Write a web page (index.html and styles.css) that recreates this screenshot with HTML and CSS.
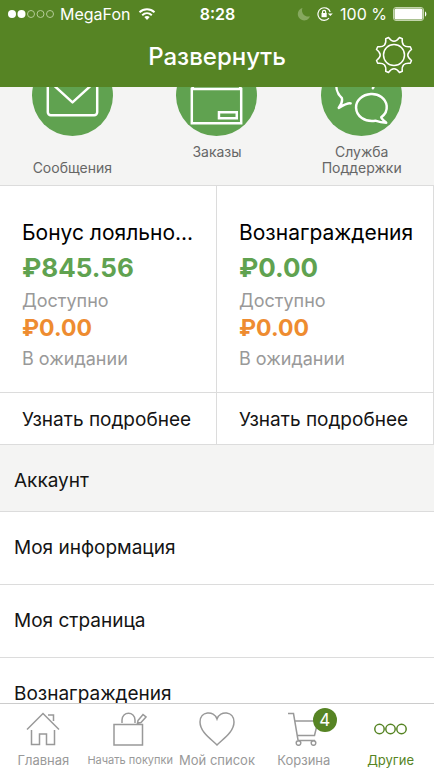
FILE: index.html
```html
<!DOCTYPE html>
<html lang="ru">
<head>
<meta charset="utf-8">
<meta name="viewport" content="width=device-width, initial-scale=1">
<title>Развернуть</title>
<link rel="stylesheet" href="styles.css">
</head>
<body>
<header class="header">
  <div class="status">
    <div class="status-side">
      <svg class="signal" width="46" height="10" viewBox="0 0 46 10" fill="none" stroke="#b3cb96">
        <circle cx="4" cy="5" r="4" fill="#fff" stroke="none"/><circle cx="13.500" cy="5" r="4" fill="#fff" stroke="none"/>
        <circle cx="23" cy="5" r="3.500"/><circle cx="32.500" cy="5" r="3.500"/><circle cx="42" cy="5" r="3.500"/>
      </svg>
      <span class="carrier">MegaFon</span>
      <svg class="wifi" width="18" height="12" viewBox="0 0 18 12" fill="none" stroke="#fff" stroke-width="2">
        <path d="M1.500 4.300C5.800.3 12.200.3 16.500 4.300M4.200 7.200c2.800-2.500 6.800-2.500 9.600 0"/><path d="M6.300 9c1.600-1.300 3.800-1.300 5.400 0L9 12z" fill="#fff" stroke="none"/>
      </svg>
    </div>
    <time class="clock">8:28</time>
    <div class="status-side status-right">
      <svg width="14" height="14" viewBox="0 0 14 14"><path d="M5.500 1A6.300 6.300 0 1 0 13 9.300C8 10.800 3.400 6 5.500 1z" fill="#86a85f"/></svg>
      <svg width="17" height="14" viewBox="0 0 17 14" fill="none" stroke="#fff" stroke-width="1.200">
        <path d="M13.200 5A6.300 6.300 0 1 0 12 11.200"/><path d="M10.800 6.500h5L13.300 9z" fill="#fff" stroke="none"/><path d="M5.500 6.500V5a1.600 1.600 0 0 1 3.200 0v1.500"/><path d="M4.500 6h5.200v4.200H4.500z" fill="#fff" stroke="none"/>
      </svg>
      <span>100 %</span>
      <svg class="battery" width="34" height="14" viewBox="0 0 34 14"><rect x=".5" y=".5" width="30" height="13" rx="2.500" fill="none" stroke="#c3d5ac"/><rect x="1.500" y="1.500" width="28" height="11" rx="1.500" fill="#fff"/><path d="M32 4.500c1.800.5 1.800 4.500 0 5z" fill="#fff"/></svg>
    </div>
  </div>
  <div class="navbar">
    <h1 class="title">Развернуть</h1>
    <button class="settings" aria-label="Настройки">
      <svg width="38" height="38" viewBox="-19 -19 38 38" fill="none" stroke="#fff" stroke-width="1.500" stroke-linejoin="round">
        <circle r="10.500"/>
        <path d="M-5.500-17.500Q0-10 5.500-17.500L8.300-16.300Q7.100-7.100 16.300-8.300L17.500-5.500Q10 0 17.500 5.500L16.300 8.300Q7.100 7.100 8.300 16.300L5.500 17.500Q0 10-5.500 17.500L-8.300 16.300Q-7.100 7.100-16.300 8.300L-17.500 5.500Q-10 0-17.500-5.500L-16.300-8.300Q-7.100-7.100-8.300-16.300Z"/>
      </svg>
    </button>
  </div>
</header>

<main class="content">
  <nav class="actions">
    <a class="action" href="#messages">
      <svg class="action-icon" viewBox="0 0 82 82" fill="none" stroke="#fff" stroke-width="2.500" stroke-linejoin="round" stroke-linecap="round"><circle cx="41" cy="41" r="41" fill="#60a250" stroke="none"/><rect x="16" y="23" width="50" height="38" rx="3"/><path d="M18 27l23 21 23-21"/></svg>
      <span class="action-label action-label-low">Сообщения</span>
    </a>
    <a class="action" href="#orders">
      <svg class="action-icon" viewBox="0 0 82 82" fill="none" stroke="#fff" stroke-width="2.500"><circle cx="41" cy="41" r="41" fill="#60a250" stroke="none"/><path d="M16 34.500h50v34.500H16zM16 34.500l6-12h38l6 12"/><path d="M43.500 58h18v6h-18z"/></svg>
      <span class="action-label">Заказы</span>
    </a>
    <a class="action" href="#support">
      <svg class="action-icon" viewBox="0 0 82 82" fill="none" stroke="#fff" stroke-width="2.500" stroke-linejoin="round" stroke-linecap="round"><circle cx="41" cy="41" r="41" fill="#60a250" stroke="none"/><path d="M30 49c-3-.5-6 1-12 4.500 3-4 4-7 3-10C10 33 17 17 34 17c14 0 20 8 19 16M52.500 33.500v.2"/><path d="M61 63c4-3 6-7 5.500-11.500-1-7.500-8-12.500-16-12-8.500.5-15.500 6.500-15 14 .5 8.500 8.500 14.500 19.500 13 4 1.500 7.500 2 11 2-2.500-2-4.500-3.500-5-5.500z"/></svg>
      <span class="action-label">Служба Поддержки</span>
    </a>
  </nav>

  <section class="cards">
    <article class="card">
      <div class="card-body">
        <h2 class="card-title">Бонус лояльно...</h2>
        <div class="amount available">₽845.56</div>
        <div class="caption">Доступно</div>
        <div class="amount pending">₽0.00</div>
        <div class="caption">В ожидании</div>
      </div>
      <a class="more" href="#bonus">Узнать подробнее</a>
    </article>
    <article class="card">
      <div class="card-body">
        <h2 class="card-title">Вознаграждения</h2>
        <div class="amount available">₽0.00</div>
        <div class="caption">Доступно</div>
        <div class="amount pending">₽0.00</div>
        <div class="caption">В ожидании</div>
      </div>
      <a class="more" href="#rewards">Узнать подробнее</a>
    </article>
  </section>

  <section>
    <h2 class="section-title">Аккаунт</h2>
    <nav>
      <a class="row" href="#info">Моя информация</a>
      <a class="row" href="#page">Моя страница</a>
      <a class="row" href="#account-rewards">Вознаграждения</a>
    </nav>
  </section>
</main>

<nav class="tabbar">
  <a class="tab" href="#home">
    <svg width="34" height="34" viewBox="0 0 34 34"><path d="M1 17.500L17 1.500l16 16M22 3h5.500v6M5.500 18v14.500h8V22h7v10.500h8V18"/></svg>
    <span>Главная</span>
  </a>
  <a class="tab" href="#shop">
    <svg width="34" height="34" viewBox="0 0 34 34"><path d="M1 12.500h28.500v20.500H1zM9 11V8c0-9 13-9 13 0v3M25 8.500l5-6 3 2.500-5 5.500-3.500.5z"/></svg>
    <span class="tab-label-long">Начать покупки</span>
  </a>
  <a class="tab" href="#list">
    <svg width="36" height="34" viewBox="0 0 36 34"><path d="M18 33C12 27 1 20 1 10 1-1 15-2 18 7c3-9 17-8 17 3 0 10-11 17-17 23z"/></svg>
    <span>Мой список</span>
  </a>
  <a class="tab" href="#cart">
    <svg width="34" height="34" viewBox="0 0 34 34"><path d="M1 1.500h5.500L11 28M8 9h23l-3.500 14.500H10M11 28.500h17"/><circle cx="11.500" cy="31" r="2.300"/><circle cx="26.500" cy="31" r="2.300"/></svg>
    <span class="badge">4</span>
    <span>Корзина</span>
  </a>
  <a class="tab tab-active" href="#more" aria-current="page">
    <svg width="34" height="34" viewBox="0 0 34 34"><circle cx="5.500" cy="17" r="4.700"/><circle cx="16.500" cy="17" r="4.700"/><circle cx="27.500" cy="17" r="4.700"/></svg>
    <span>Другие</span>
  </a>
</nav>
</body>
</html>
```
FILE: styles.css
```css
* { box-sizing: border-box; }

body {
  margin: 0;
  height: 100vh;
  display: flex;
  flex-direction: column;
  overflow: hidden;
  background: #fff;
  color: #141414;
  font-family: Inter, "Noto Sans", sans-serif;
  font-size: 19px;
}

a { color: inherit; text-decoration: none; }
h1, h2 { margin: 0; font-weight: 400; }
svg { display: block; flex: none; }

.header {
  position: relative;
  z-index: 1;
  flex: none;
  background: #568424;
  color: #fff;
}

.status {
  display: grid;
  grid-template-columns: 1fr auto 1fr;
  align-items: center;
  height: 28px;
  padding: 0 7px 0 8px;
  font-size: 16px;
}
.status-side { display: flex; align-items: center; gap: 6px; white-space: nowrap; }
.status-right { justify-content: flex-end; }
.wifi { margin-left: 2px; }
.clock { font-weight: 600; }

.navbar {
  display: grid;
  grid-template-columns: 1fr auto 1fr;
  align-items: start;
  height: 59px;
  padding: 8px 21px 0;
}
.title { grid-column: 2; font-size: 24px; line-height: 42px; font-weight: 500; }
.settings {
  justify-self: end;
  padding: 0;
  border: 0;
  background: none;
}

.content { flex: 1; min-height: 0; overflow: hidden; }

/* The first row is scrolled partly under the header. */
.actions {
  display: grid;
  grid-template-columns: repeat(3, 1fr);
  margin-top: -32px;
  padding-bottom: 9px;
  background: #f4f4f3;
}
.action { display: flex; flex-direction: column; align-items: center; gap: 8px; }
.action-icon { width: 81px; height: 81px; }
.action-label {
  width: min-content;
  font-size: 14px;
  line-height: 16px;
  text-align: center;
  color: #666;
}
.action-label-low { padding-top: 16px; }

.cards {
  display: grid;
  grid-template-columns: repeat(2, 1fr);
  border-top: 1px solid #dcdcdc;
}
.card { min-width: 0; border-right: 1px solid #dcdcdc; }
.card-body { padding: 31px 22px 15px; }
.card-title { font-size: 21px; line-height: 32px; white-space: nowrap; color: #000; }
.amount { font-weight: 700; }
.available { font-size: 26px; line-height: 38px; color: #60a250; }
.pending { font-size: 23px; line-height: 26px; color: #ee8c30; }
.caption { font-size: 18px; line-height: 28px; color: #999; }
.caption:last-child { line-height: 36px; }
.more {
  display: block;
  padding: 3px 22px 0;
  border-top: 1px solid #dcdcdc;
  line-height: 48px;
  white-space: nowrap;
}

.section-title {
  padding: 6px 14px 0;
  border-top: 1px solid #dcdcdc;
  border-bottom: 1px solid #dcdcdc;
  background: #f4f4f3;
  font-size: 19px;
  line-height: 60px;
}
.row {
  display: block;
  padding: 0 14px;
  border-bottom: 1px solid #dcdcdc;
  line-height: 72px;
}

.tabbar {
  flex: none;
  display: grid;
  grid-template-columns: repeat(5, 1fr);
  height: 67px;
  padding-top: 8px;
  border-top: 1px solid #ccc;
  background: #fff;
  color: #999;
  font-size: 13px;
  line-height: 16px;
}
.tab {
  position: relative;
  display: flex;
  flex-direction: column;
  align-items: center;
  gap: 6px;
  min-width: 0;
  white-space: nowrap;
}
.tab svg { fill: none; stroke: currentColor; stroke-width: 1.5; }
.tab-label-long { font-size: 11px; }
.tab-active { color: #568424; }
.badge {
  position: absolute;
  top: -4px;
  left: calc(50% + 9px);
  width: 24px;
  height: 24px;
  border-radius: 50%;
  background: #568424;
  color: #fff;
  font-size: 17px;
  line-height: 24px;
  text-align: center;
}
```
